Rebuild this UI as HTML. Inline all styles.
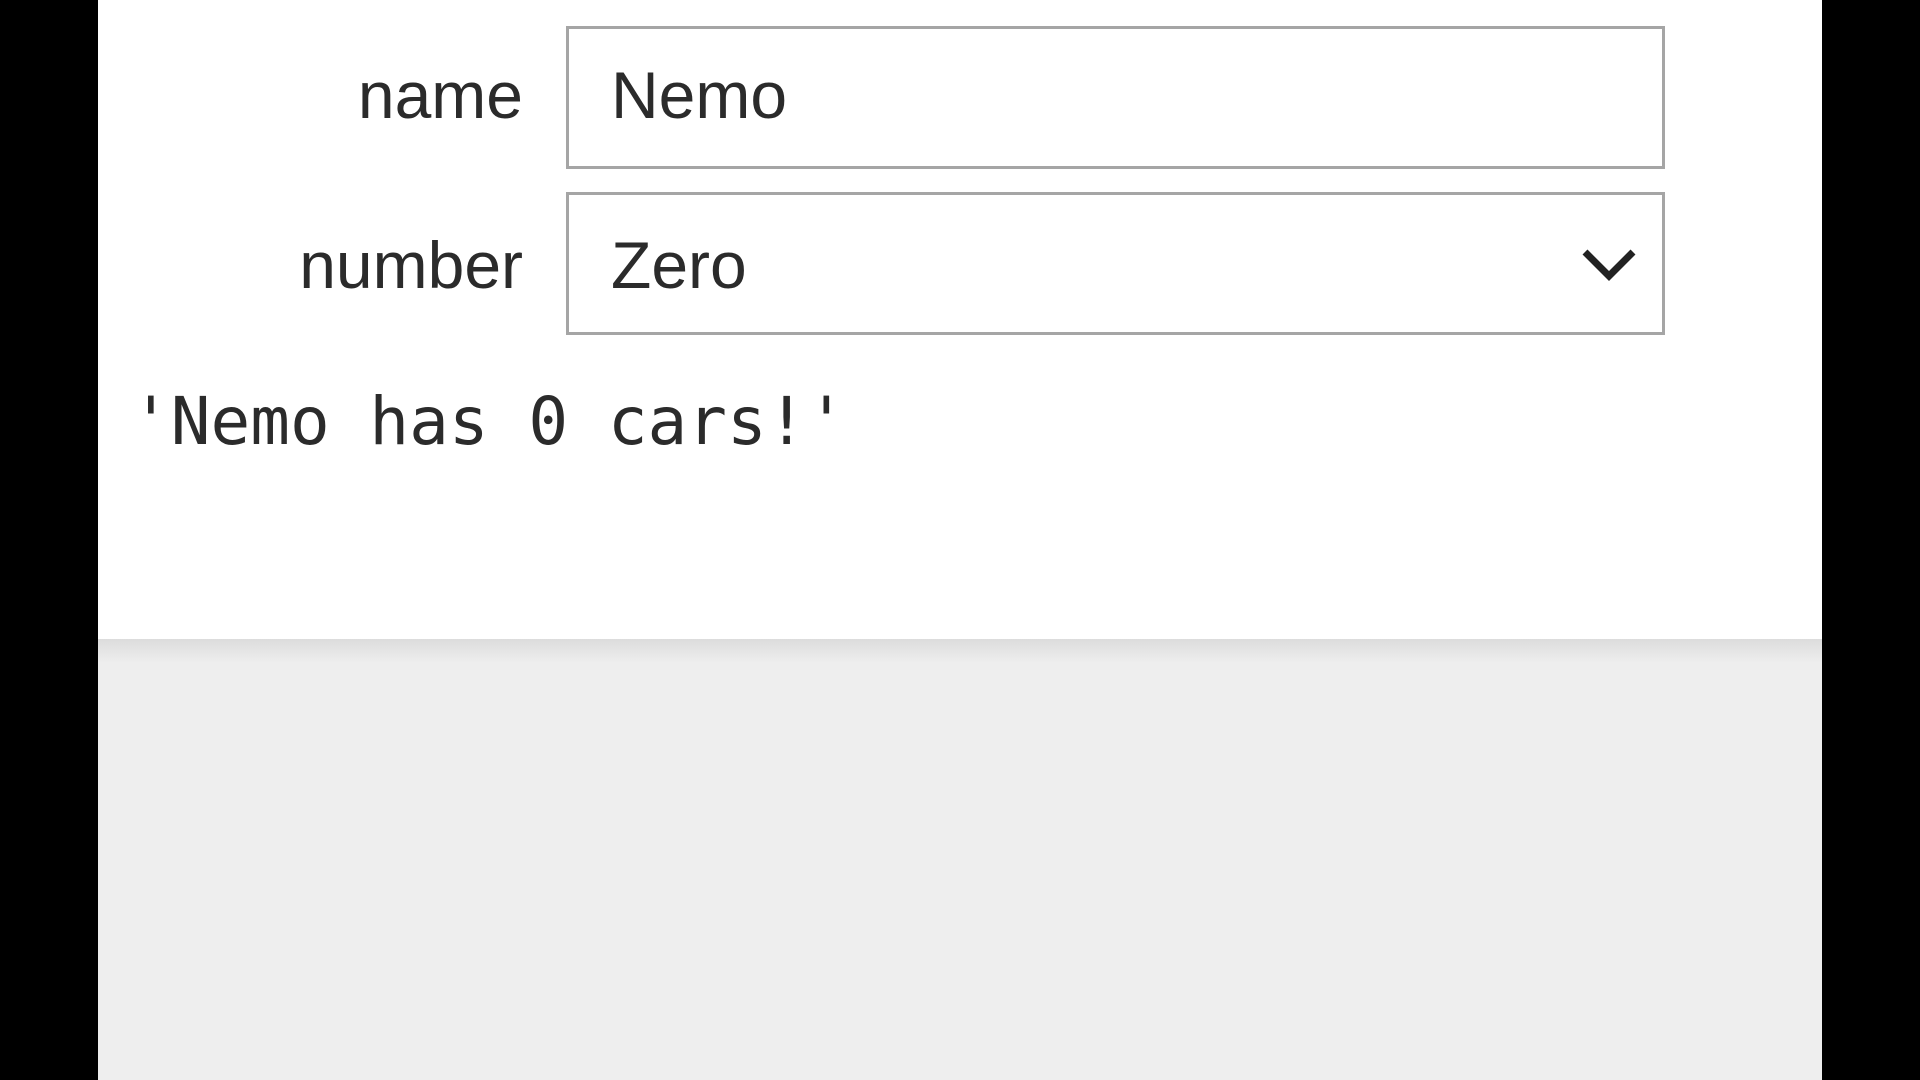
<!DOCTYPE html>
<html><head><style>
body{margin:0;width:1920px;height:1080px;background:#000;position:relative;overflow:hidden;font-family:"Liberation Sans",sans-serif;color:#2b2b2b}
.main{position:absolute;left:98px;top:0;width:1724px;height:1080px;background:#eeeeee}
.white{position:absolute;left:98px;top:0;width:1724px;height:639px;background:#fff}
.shadow{position:absolute;left:98px;top:639px;width:1724px;height:24px;background:linear-gradient(#dcdcdc,#eeeeee)}
.lbl{position:absolute;right:1397px;font-size:66px;line-height:1;}
.box{position:absolute;left:566px;width:1093px;border:3px solid #a5a5a5;background:#fff}
.val{position:absolute;left:611px;font-size:66px;line-height:1}
.mono{position:absolute;left:131px;font-family:"DejaVu Sans Mono","Liberation Mono",monospace;font-size:66px;line-height:1}
</style></head><body>
<div class="main"></div><div class="white"></div><div class="shadow"></div>
<div class="box" style="top:26px;height:137px"></div>
<div class="box" style="top:192px;height:137px"></div>
<div class="lbl" style="top:62px">name</div>
<div class="lbl" style="top:232px">number</div>
<div class="val" style="top:62px">Nemo</div>
<div class="val" style="top:232px">Zero</div>
<svg style="position:absolute;left:1580px;top:246px" width="58" height="36"><path d="M5 6 L29 30 L53 6" fill="none" stroke="#222" stroke-width="7"/></svg>
<div class="mono" style="top:389px">'Nemo has 0 cars!'</div>
</body></html>
